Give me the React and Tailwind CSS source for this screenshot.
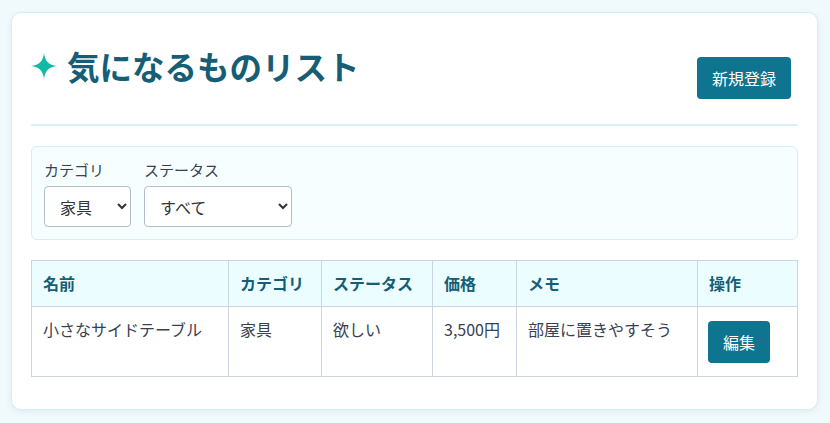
import React from 'react';

const font = { fontFamily: '"Noto Sans CJK JP", "Noto Sans", sans-serif' };

function Sparkle() {
  return (
    <svg width="26" height="26" viewBox="0 0 24 24" className="shrink-0">
      <path d="M12 0 C12.8 7.5 16.5 11.2 24 12 C16.5 12.8 12.8 16.5 12 24 C11.2 16.5 7.5 12.8 0 12 C7.5 11.2 11.2 7.5 12 0 Z" fill="#14b8a6" />
    </svg>
  );
}

const rows = [
  { name: '小さなサイドテーブル', category: '家具', status: '欲しい', price: '3,500円', memo: '部屋に置きやすそう' },
];

export default function App() {
  return (
    <div className="min-h-screen bg-[#f0f9fb] pl-[11px] pr-[12px] pt-[12px]" style={font}>
      <div className="bg-white rounded-[10px] border border-[#d5eef4] shadow-[0_2px_6px_rgba(14,116,144,0.08)] px-[19px] pb-[32px]">
        {/* Header */}
        <div className="flex justify-between items-start border-b-2 border-[#d7f3f8] pb-[25px]">
          <h1 className="flex items-center gap-[10px] mt-[29px] mb-[-9px] text-[32.5px] leading-[48px] font-bold text-[#155e75]">
            <Sparkle />
            気になるものリスト
          </h1>
          <button className="mt-[44px] mr-[7px] h-[42px] px-[15px] rounded-[4px] bg-[#0e7490] text-white text-[16px]">
            新規登録
          </button>
        </div>

        {/* Filters */}
        <div className="mt-[20px] rounded-[6px] border border-[#d5eef4] bg-[#f6feff] px-3 pt-3 pb-3">
          <div className="flex gap-[13px]">
            <div className="flex flex-col">
              <label className="text-[15px] leading-[22px] text-[#374151] mb-[5px]">カテゴリ</label>
              <select defaultValue="家具" className="w-[87px] h-[41px] pl-[11px] pr-[4px] border border-[#b5bcc7] rounded-[4px] bg-white text-[16px] text-[#333]">
                <option>すべて</option>
                <option>家具</option>
              </select>
            </div>
            <div className="flex flex-col">
              <label className="text-[15px] leading-[22px] text-[#374151] mb-[5px]">ステータス</label>
              <select defaultValue="すべて" className="w-[148px] h-[41px] pl-[11px] pr-[4px] border border-[#b5bcc7] rounded-[4px] bg-white text-[16px] text-[#333]">
                <option>すべて</option>
                <option>欲しい</option>
              </select>
            </div>
          </div>
        </div>

        {/* Table */}
        <table className="mt-[20px] w-full table-fixed border-collapse text-[16px] leading-[21px]">
          <colgroup>
            <col className="w-[197px]" />
            <col className="w-[93px]" />
            <col className="w-[111px]" />
            <col className="w-[84px]" />
            <col className="w-[181px]" />
            <col className="w-[100px]" />
          </colgroup>
          <thead>
            <tr className="bg-[#ebfdff]">
              {['名前', 'カテゴリ', 'ステータス', '価格', 'メモ', '操作'].map((h) => (
                <th key={h} className="border border-[#cbd5e1] pl-[11px] pr-3 py-3 text-left font-bold text-[#155e75]">
                  {h}
                </th>
              ))}
            </tr>
          </thead>
          <tbody>
            {rows.map((r) => (
              <tr key={r.name} className="text-[#374151]">
                <td className="border border-[#cbd5e1] pl-[11px] pr-3 py-3 align-top">{r.name}</td>
                <td className="border border-[#cbd5e1] pl-[11px] pr-3 py-3 align-top">{r.category}</td>
                <td className="border border-[#cbd5e1] pl-[11px] pr-3 py-3 align-top">{r.status}</td>
                <td className="border border-[#cbd5e1] pl-[11px] pr-3 py-3 align-top">{r.price}</td>
                <td className="border border-[#cbd5e1] pl-[11px] pr-3 py-3 align-top">{r.memo}</td>
                <td className="border border-[#cbd5e1] px-[10px] pt-[14px] pb-[13px] align-top">
                  <button className="block w-[62px] h-[42px] rounded-[4px] bg-[#0e7490] text-white text-[16px]">
                    編集
                  </button>
                </td>
              </tr>
            ))}
          </tbody>
        </table>
      </div>
    </div>
  );
}
